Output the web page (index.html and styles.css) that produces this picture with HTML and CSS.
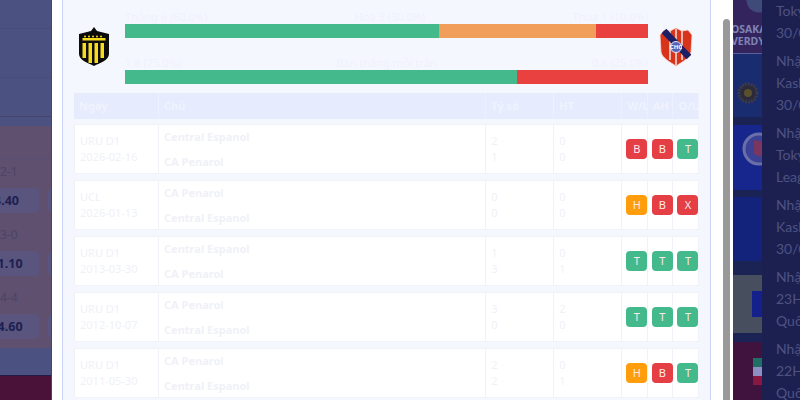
FILE: index.html
```html
<!DOCTYPE html>
<html lang="vi">
<head>
  <meta charset="UTF-8">
  <title>Đối đầu</title>
  <link rel="stylesheet" href="styles.css">
</head>
<body>
  <div class="page">
    <div class="back-left">
      <div class="back-head">
        <div class="back-line back-line-a"></div>
        <div class="back-line back-line-b"></div>
        <div class="back-line back-line-c"></div>
      </div>
      <div class="odds">
        <div class="odds-group">
          <div class="odds-score">2-1</div>
          <div class="odds-row"><span class="odds-pill">4.40</span><span class="odds-pill"></span></div>
        </div>
        <div class="odds-group">
          <div class="odds-score">3-0</div>
          <div class="odds-row"><span class="odds-pill">41.10</span><span class="odds-pill"></span></div>
        </div>
        <div class="odds-group">
          <div class="odds-score">4-4</div>
          <div class="odds-row"><span class="odds-pill">64.60</span><span class="odds-pill"></span></div>
        </div>
      </div>
      <div class="back-foot"></div>
      <div class="back-bottom"></div>
    </div>

    <div class="modal">
      <div class="panel">
        <div class="summary">
          <svg class="crest crest-home" width="30" height="39" viewBox="0 0 30 39">
            <path d="M15 0l3 4 12 3v20c0 6-9 9-15 12C9 36 0 33 0 27V7l12-3z" fill="#0c0c0c"/>
            <g fill="#f7dc1e">
              <circle cx="6" cy="9.500" r="1"/><circle cx="10" cy="9.500" r="1"/><circle cx="14" cy="9.500" r="1"/><circle cx="18" cy="9.500" r="1"/><circle cx="22" cy="9.500" r="1"/>
              <rect x="3.500" y="11" width="23" height="2.500"/>
              <rect x="3.500" y="16" width="3.500" height="15"/>
              <rect x="9.500" y="16" width="3.500" height="20"/>
              <rect x="15.500" y="16" width="3.500" height="20"/>
              <rect x="21.500" y="16" width="3.500" height="15"/>
            </g>
          </svg>
          <div class="bars">
            <div class="bar-labels"><span>Thắng 6 (60.0%)</span><span>Hoà 3 (30.0%)</span><span>Thua 1 (10.0%)</span></div>
            <div class="bar">
              <div class="seg seg-green" style="width:60%"></div>
              <div class="seg seg-orange" style="width:30%"></div>
              <div class="seg seg-red" style="width:10%"></div>
            </div>
            <div class="bar-labels bar-labels-second"><span>1.8 (75.0%)</span><span>Bàn thắng mỗi trận</span><span>0.6 (25.0%)</span></div>
            <div class="bar">
              <div class="seg seg-green" style="width:75%"></div>
              <div class="seg seg-red" style="width:25%"></div>
            </div>
          </div>
          <svg class="crest crest-away" width="34" height="38" viewBox="0 0 34 38">
            <path d="M5 2l6 1 6-3 6 3 6-1 4 5-1 17c-1 6-9 10-15 14C11 34 3 30 2 24L1 7z" fill="#d8341c" stroke="#f6d5cf" stroke-width=".8"/>
            <path d="M11 3v29M17 1v36M23 3v29" stroke="#f3d6d0" stroke-width="1.600"/>
            <path d="M5 3l25 26" stroke="#1c1f66" stroke-width="6.500"/>
            <circle cx="17" cy="19" r="5.500" fill="#5a62b8" stroke="#e8e8f4"/>
            <text class="crest-text" x="17" y="21">CHC</text>
          </svg>
        </div>

        <table class="h2h">
          <thead>
            <tr>
              <th class="col-date">Ngày</th>
              <th class="col-club">Chủ</th>
              <th class="col-num">Tỷ số</th>
              <th class="col-num">HT</th>
              <th class="col-res">W/L</th>
              <th class="col-res">AH</th>
              <th class="col-res">O/U</th>
            </tr>
          </thead>
          <tbody>
            <tr>
              <td><div>URU D1</div><div>2026-02-16</div></td>
              <td class="club"><div>Central Espanol</div><div>CA Penarol</div></td>
              <td><div>2</div><div>1</div></td>
              <td><div>0</div><div>0</div></td>
              <td><span class="badge red">B</span></td>
              <td><span class="badge red">B</span></td>
              <td><span class="badge green">T</span></td>
            </tr>
            <tr>
              <td><div>UCL</div><div>2026-01-13</div></td>
              <td class="club"><div>CA Penarol</div><div>Central Espanol</div></td>
              <td><div>0</div><div>0</div></td>
              <td><div>0</div><div>0</div></td>
              <td><span class="badge orange">H</span></td>
              <td><span class="badge red">B</span></td>
              <td><span class="badge red">X</span></td>
            </tr>
            <tr>
              <td><div>URU D1</div><div>2013-03-30</div></td>
              <td class="club"><div>Central Espanol</div><div>CA Penarol</div></td>
              <td><div>1</div><div>3</div></td>
              <td><div>0</div><div>1</div></td>
              <td><span class="badge green">T</span></td>
              <td><span class="badge green">T</span></td>
              <td><span class="badge green">T</span></td>
            </tr>
            <tr>
              <td><div>URU D1</div><div>2012-10-07</div></td>
              <td class="club"><div>CA Penarol</div><div>Central Espanol</div></td>
              <td><div>3</div><div>0</div></td>
              <td><div>2</div><div>0</div></td>
              <td><span class="badge green">T</span></td>
              <td><span class="badge green">T</span></td>
              <td><span class="badge green">T</span></td>
            </tr>
            <tr>
              <td><div>URU D1</div><div>2011-05-30</div></td>
              <td class="club"><div>CA Penarol</div><div>Central Espanol</div></td>
              <td><div>2</div><div>2</div></td>
              <td><div>0</div><div>1</div></td>
              <td><span class="badge orange">H</span></td>
              <td><span class="badge red">B</span></td>
              <td><span class="badge green">T</span></td>
            </tr>
          </tbody>
        </table>
      </div>
      <div class="scroll-thumb"></div>
    </div>

    <div class="back-right">
      <div class="tiles">
        <div class="tile tile-osaka"><div class="tile-words">OSAKA<br>VERDY</div></div>
        <div class="tile tile-navy">
          <svg class="tile-icon-low" width="22" height="22" viewBox="0 0 22 22"><circle cx="11" cy="11" r="9" fill="#2a2a3a" stroke="#3d3a4a" stroke-width="3" stroke-dasharray="2 1"/><circle cx="11" cy="11" r="4" fill="#5a5030"/></svg>
        </div>
        <div class="tile tile-blue">
          <svg class="tile-icon-high" width="20" height="34" viewBox="0 0 20 34"><circle cx="17" cy="17" r="15" fill="#3b4296" stroke="#6b6fa8" stroke-width="3"/><path d="M12 8l10 2v16l-10-4z" fill="#7a3560"/></svg>
        </div>
        <div class="tile tile-deep"></div>
        <div class="tile tile-olive"><span class="olive-block"></span></div>
        <div class="tile tile-maroon"><span class="flag"></span></div>
      </div>
      <div class="news">
        <p>Tokyo<br>30/01</p>
        <p>Nhận<br>Kashima<br>30/01</p>
        <p>Nhận<br>Tokyo<br>League</p>
        <p>Nhận<br>Kashima<br>30/01</p>
        <p>Nhận<br>23H00<br>Quốc</p>
        <p>Nhận<br>22H00<br>Quốc</p>
      </div>
    </div>
  </div>
</body>
</html>
```

FILE: styles.css
```css
* {
  box-sizing: border-box;
}
html, body {
  margin: 0;
  height: 100%;
  overflow: hidden;
}
body {
  font-family: "Noto Sans", Arial, sans-serif;
  background: #1c2050;
}
.page {
  display: flex;
  width: 800px;
  height: 400px;
  overflow: hidden;
}

/* dimmed page behind the modal */
.back-left {
  width: 52px;
  flex: none;
  display: flex;
  flex-direction: column;
  overflow: hidden;
  background: #4b5180;
  border-right: 1px solid #42466f;
}
.back-head {
  height: 126px;
  flex: none;
}
.back-line {
  border-bottom: 1px solid #474c7a;
}
.back-line-a {
  height: 29px;
}
.back-line-b {
  height: 49px;
}
.back-line-c {
  height: 39px;
  border-bottom-color: #45446a;
}
.odds {
  height: 222px;
  flex: none;
  padding-top: 32px;
  background: #5f5070;
  box-shadow: inset 0 32px 0 #5f5070, inset 0 33px 0 #585072;
}
.odds-group {
  height: 63px;
}
.odds-score {
  height: 30px;
  padding-top: 5px;
  font-size: 12px;
  color: #4a4562;
}
.odds-row {
  display: flex;
  gap: 9px;
  margin-left: -26px;
  width: 140px;
}
.odds-pill {
  width: 65px;
  height: 25px;
  flex: none;
  border-radius: 5px;
  background: #59557f;
  font-size: 12.500px;
  font-weight: 700;
  line-height: 25px;
  text-align: center;
  color: #1d2050;
}
.back-foot {
  height: 27px;
  flex: none;
}
.back-bottom {
  flex: 1;
  border-top: 1px solid #241a48;
  background: #4a1238;
}

/* modal */
.modal {
  width: 681px;
  flex: none;
  display: flex;
  padding: 0 3px 0 10px;
  background: #fff;
}
.panel {
  width: 649px;
  flex: none;
  height: 400px;
  padding: 9px 12px 0 11px;
  overflow: hidden;
  background: #f5f7ff;
  border-left: 1px solid #ccd4f8;
  border-right: 1px solid #ccd4f8;
}
.scroll-thumb {
  width: 8px;
  margin: 19px 0 0 12px;
  border-radius: 4px 4px 0 0;
  background: #999;
}

.summary {
  display: flex;
  align-items: center;
  height: 75px;
  margin-bottom: 9px;
}
.crest {
  flex: none;
}
.crest-home {
  margin: 0 16px 0 5px;
}
.crest-away {
  margin-left: 11px;
}
.crest-text {
  font-size: 6px;
  font-weight: 700;
  text-anchor: middle;
  fill: #fff;
}
.bars {
  width: 523px;
  flex: none;
}
.bar-labels {
  display: flex;
  justify-content: space-between;
  height: 14px;
  font-size: 11px;
  line-height: 14px;
  color: #eff1fb;
}
.bar-labels-second {
  margin-top: 18px;
}
.bar {
  display: flex;
  height: 14px;
}
.seg-green {
  background: #43b98c;
}
.seg-orange {
  background: #f09e5a;
}
.seg-red {
  background: #e94040;
}

.h2h {
  width: 625px;
  margin-top: -6px;
  table-layout: fixed;
  border-collapse: separate;
  border-spacing: 0 6px;
  font-size: 11px;
  color: #f0f1f7;
}
.h2h th {
  height: 25px;
  padding: 0 5px;
  text-align: left;
  font-size: 11px;
  font-weight: 700;
  color: #f0f3fe;
  background: #e6ebfd;
  border-right: 1px solid #edf0fe;
  box-shadow: 0 1px 0 #e6ebfd;
}
.col-date {
  width: 85px;
}
.col-club {
  width: 327px;
}
.col-num {
  width: 68px;
}
.col-res {
  width: 25.500px;
}
.h2h td {
  height: 50px;
  padding: 0 5px;
  background: #fff;
  border-top: 1px solid #f1f3f9;
  border-bottom: 1px solid #f1f3f9;
  border-right: 1px solid #f0f2f8;
  line-height: 16px;
}
.h2h td:first-child {
  border-left: 1px solid #f0f2f8;
}
.h2h .club div {
  height: 24px;
  font-weight: 700;
  line-height: 24px;
  color: #f0f1f7;
}
.h2h .club div + div {
  line-height: 26px;
}
.h2h td:nth-child(n+5) {
  padding: 0 0 0 4px;
}
.badge {
  display: block;
  width: 21px;
  height: 20px;
  border-radius: 4px;
  font-size: 11px;
  line-height: 20px;
  text-align: center;
  color: #fbeaea;
}
.red {
  background: #e53e45;
}
.green {
  background: #43b98c;
}
.orange {
  background: #ff9d0d;
}

/* right side of the page behind the modal */
.back-right {
  flex: 1;
  display: flex;
  min-width: 0;
}
.tiles {
  width: 29px;
  flex: none;
  display: flex;
  flex-direction: column;
  background: #1b2254;
}
.tile {
  display: flex;
  align-items: center;
  overflow: hidden;
  flex: none;
}
.tile-osaka {
  height: 54px;
  background: radial-gradient(circle at 26px 0, #3f4a78 12px, #33245e 13px);
  border-bottom: 1px solid #5a6096;
}
.tile-words {
  margin: 16px 0 0 -2px;
  font-size: 10.500px;
  font-weight: 700;
  line-height: 12px;
  white-space: nowrap;
  color: #7d84b4;
}
.tile-navy {
  height: 63px;
  margin-bottom: 8px;
  justify-content: center;
  background: #1a2c70;
}
.tile-icon-low {
  margin-top: 14px;
}
.tile-blue {
  height: 65px;
  margin-bottom: 7px;
  justify-content: flex-end;
  background: #17268c;
}
.tile-icon-high {
  margin-top: -18px;
}
.tile-deep {
  height: 64px;
  margin-bottom: 14px;
  background: #13237c;
}
.tile-olive {
  height: 58px;
  margin-bottom: 9px;
  justify-content: flex-end;
  background: #474f5e;
}
.olive-block {
  width: 10px;
  height: 26px;
  background: #14208c;
}
.tile-maroon {
  height: 58px;
  justify-content: flex-end;
  background: #40123e;
}
.flag {
  width: 9px;
  height: 27px;
  background: linear-gradient(#1f6f66 33%, #8d8fc0 33%, #8d8fc0 66%, #8a1642 66%);
}
.news {
  flex: 1;
  overflow: hidden;
  padding-left: 14px;
  background: #1c2050;
  font-family: Lato, sans-serif;
  font-size: 14px;
  line-height: 22px;
  white-space: nowrap;
  color: #4e5283;
}
.news p {
  margin: 0 0 6px;
}
```
